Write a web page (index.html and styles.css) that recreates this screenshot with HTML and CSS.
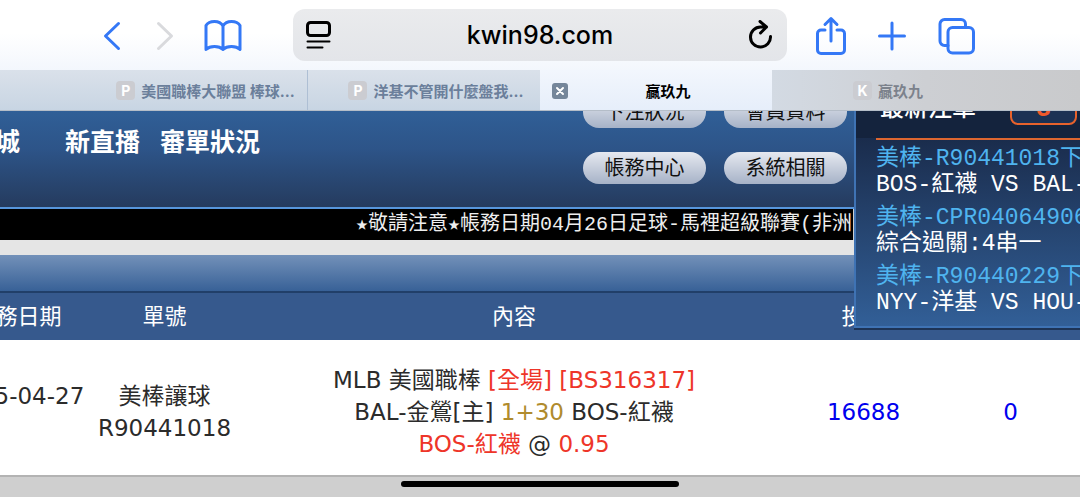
FILE: index.html
```html
<!DOCTYPE html>
<html lang="zh-TW">
<head>
    <meta charset="UTF-8">
    <meta name="viewport" content="width=device-width, initial-scale=1.0">
    <title>贏玖九</title>
    <link rel="stylesheet" href="styles.css">
</head>
<body>
    <div class="browser">
        <div class="toolbar">
            <div class="tools tools-left">
                <button type="button" aria-label="上一頁">
                    <svg width="18" height="30" viewBox="0 0 18 30"><path d="M15.500 2.500 2.500 15l13 12.500"/></svg>
                </button>
                <button type="button" class="disabled" aria-label="下一頁" disabled>
                    <svg width="18" height="30" viewBox="0 0 18 30"><path d="M2.500 2.500l13 12.500-13 12.500"/></svg>
                </button>
                <button type="button" class="book" aria-label="書籤">
                    <svg width="38" height="32" viewBox="0 0 38 32"><path d="M19 6C17 2.500 13.500 1.500 10.500 1.500 7 1.500 3.500 3 2 5.500V29.500C4 27.500 7 26.500 10.500 26.500c3.500 0 6.500 1 8.500 3 2-2 5-3 8.500-3s6.500 1 8.500 3V5.500C34.500 3 31 1.500 27.500 1.500 24.500 1.500 21 2.500 19 6V29.500"/></svg>
                </button>
            </div>
            <div class="address">
                <button type="button" aria-label="網頁選單">
                    <svg width="26" height="30" viewBox="0 0 26 30"><rect x="1.500" y="2.500" width="22" height="13" rx="3"/><path class="thin" d="M1.500 21.500h22M1.500 27.500h15"/></svg>
                </button>
                <input type="text" value="kwin98.com" aria-label="網址">
                <button type="button" aria-label="重新載入">
                    <svg width="26" height="30" viewBox="0 0 26 30"><path d="M22.500 16.500A10 10 0 1 1 12.500 7h6M12 1.500 18.500 7 12.500 13"/></svg>
                </button>
            </div>
            <div class="tools tools-right">
                <button type="button" aria-label="分享">
                    <svg width="30" height="40" viewBox="0 0 30 40"><path d="M9 14H5a3.500 3.500 0 0 0-3.500 3.500V34A3.500 3.500 0 0 0 5 37.500H25a3.500 3.500 0 0 0 3.500-3.500V17.500A3.500 3.500 0 0 0 25 14H21M15 25V2.500M9 8.500l6-6 6 6"/></svg>
                </button>
                <button type="button" aria-label="新增分頁">
                    <svg width="28" height="30" viewBox="0 0 28 30"><path d="M14 2v26M1.500 15h25"/></svg>
                </button>
                <button type="button" aria-label="所有分頁">
                    <svg width="38" height="38" viewBox="0 0 38 38"><path d="M10 28.500H6.500a4.500 4.500 0 0 1-4.500-4.500V7A4.500 4.500 0 0 1 6.500 2.500H23A4.500 4.500 0 0 1 27.500 7v3.500"/><rect x="10" y="10.500" width="25.500" height="25.500" rx="4.500"/></svg>
                </button>
            </div>
        </div>
        <div class="tabs">
            <div class="tab"><span class="favicon">P</span>美國職棒大聯盟 棒球...</div>
            <div class="tab"><span class="favicon">P</span>洋基不管開什麼盤我...</div>
            <div class="tab active">
                <button type="button" class="close" aria-label="關閉分頁">
                    <svg width="16" height="16" viewBox="0 0 16 16"><path d="M5 5l6 6M11 5l-6 6"/></svg>
                </button>
                贏玖九
            </div>
            <div class="tab last"><span class="favicon">K</span>贏玖九</div>
        </div>
    </div>

    <main class="page">
        <header class="site-header">
            <nav>
                <a href="#">城</a>
                <a href="#">新直播</a>
                <a href="#">審單狀況</a>
            </nav>
            <div class="menu">
                <button type="button">下注狀況</button>
                <button type="button">會員資料</button>
                <button type="button">帳務中心</button>
                <button type="button">系統相關</button>
            </div>
        </header>

        <div class="notice">★敬請注意★帳務日期04月26日足球-馬裡超級聯賽(非洲</div>
        <div class="title-bar"></div>

        <table class="bets">
            <colgroup>
                <col class="side"><col class="side"><col><col class="side"><col class="side">
            </colgroup>
            <thead>
                <tr>
                    <th>帳務日期</th>
                    <th>單號</th>
                    <th>內容</th>
                    <th>投注</th>
                    <th></th>
                </tr>
            </thead>
            <tbody>
                <tr>
                    <td>2025-04-27<br>&nbsp;</td>
                    <td>美棒讓球<br>R90441018</td>
                    <td>
                        MLB 美國職棒 <span class="red">[全場] [BS316317]</span><br>
                        BAL-金鶯[主] <span class="gold">1+30</span> BOS-紅襪<br>
                        <span class="red">BOS-紅襪</span> @ <span class="red">0.95</span>
                    </td>
                    <td class="blue">16688</td>
                    <td class="blue">0</td>
                </tr>
            </tbody>
        </table>

        <!-- 最新注單浮動視窗 -->
        <aside class="latest">
            <div class="latest-head">
                <h2>最新注單</h2>
                <span class="count">3</span>
            </div>
            <ul>
                <li><a href="#">美棒-R90441018下</a>BOS-紅襪 VS BAL-</li>
                <li><a href="#">美棒-CPR04064906</a>綜合過關:4串一</li>
                <li><a href="#">美棒-R90440229下</a>NYY-洋基 VS HOU-</li>
            </ul>
        </aside>
    </main>
    <div class="home-indicator"></div>
</body>
</html>
```
FILE: styles.css
```css
* {
    box-sizing: border-box;
}
body {
    margin: 0;
    min-height: 100vh;
    display: flex;
    flex-direction: column;
    position: relative;
    overflow: hidden;
    background: #cfcfcf;
    font-family: "DejaVu Sans", "Noto Sans CJK TC", sans-serif;
}
button {
    padding: 0;
    border: none;
    background: none;
    color: inherit;
    font: inherit;
    cursor: pointer;
}
a {
    color: inherit;
    text-decoration: none;
}
svg {
    display: block;
    fill: none;
    stroke: currentColor;
    stroke-width: 3;
    stroke-linecap: round;
    stroke-linejoin: round;
}

/* 瀏覽器工具列 */
.browser {
    font-family: Inter, "Noto Sans CJK TC", sans-serif;
    background: linear-gradient(#ffffff 30%, #e6eefa);
}
.toolbar {
    display: flex;
    align-items: center;
    height: 70px;
}
.tools {
    flex: 0 0 293px;
    display: flex;
    align-items: center;
    padding-top: 2px;
    color: #3478f6;
}
.tools-left {
    justify-content: flex-end;
    gap: 35px;
    padding-right: 51px;
}
.tools .disabled {
    color: #d9dadd;
}
.book {
    margin-left: -5px;
}
.tools-right {
    gap: 32px;
    padding-left: 29px;
}
.address {
    flex: 1;
    min-width: 0;
    height: 52px;
    display: flex;
    align-items: center;
    padding: 0 13px;
    border-radius: 12px;
    background: linear-gradient(#eaebed, #e3e5e9);
}
.address input {
    flex: 1;
    min-width: 0;
    border: none;
    background: none;
    color: #000;
    font-family: inherit;
    font-size: 25px;
    font-weight: 500;
    text-align: center;
}
.address .thin {
    stroke-width: 2;
}

/* 分頁列 */
.tabs {
    display: flex;
    height: 41px;
    border-bottom: 1px solid #b4bdc8;
    font-size: 15px;
    font-weight: 700;
}
.tab {
    position: relative;
    flex: 1 1 232px;
    display: flex;
    align-items: center;
    justify-content: center;
    gap: 6px;
    padding-left: 24px;
    white-space: nowrap;
    color: #6b7f9b;
    background: linear-gradient(#dae1ea, #c8d5e3);
}
.tab:first-child {
    flex-basis: 308px;
    padding-left: 104px;
    border-right: 1px solid #aebfd4;
}
.tab.active {
    color: #000;
    background: linear-gradient(#f2f6fd, #e6eefa);
}
.tab.last {
    flex-basis: 308px;
    padding: 0 76px 0 0;
    color: #7c828c;
    background: linear-gradient(90deg, #d3dae3, #cdcfd3 50%, #c9cacc);
}
.favicon {
    width: 19px;
    height: 19px;
    border-radius: 4px;
    background: #cbccd1;
    color: #fff;
    font-size: 14px;
    line-height: 19px;
    text-align: center;
}
.close {
    position: absolute;
    left: 12px;
    top: 13px;
    border-radius: 3px;
    background: #75869a;
    color: #fff;
}
.close svg {
    stroke-width: 2;
}

/* 網站頁首 */
.page {
    position: relative;
    overflow: hidden;
}
.site-header {
    display: flex;
    justify-content: space-between;
    height: 98px;
    padding-right: 233px;
    border-bottom: 2px solid #5796dc;
    background: linear-gradient(#305f97, #2d5488 40%, #253b5e);
}
.site-header nav {
    display: flex;
    gap: 20px;
    margin-left: -5px;
    padding-top: 13px;
    color: #fff;
    font-size: 25px;
    font-weight: 700;
    line-height: 37px;
}
.site-header nav a:first-child {
    margin-right: 25px;
}
.menu {
    display: grid;
    grid-template-columns: 123px 123px;
    grid-auto-rows: 32px;
    gap: 24px 18px;
    margin-top: -15px;
}
.menu button {
    border-radius: 16px;
    background: linear-gradient(#e6e9f0, #a6b2c7);
    color: #111;
    font-size: 20px;
    line-height: 32px;
}
.notice {
    padding-left: 356px;
    margin-right: 227px;
    height: 31px;
    overflow: hidden;
    white-space: nowrap;
    background: #000;
    color: #eee;
    font-family: "Liberation Mono", "DejaVu Sans Mono", "Noto Sans CJK TC", monospace;
    font-size: 20px;
    line-height: 32px;
}
.title-bar {
    height: 53px;
    border-top: 15px solid #e5e5e5;
    border-bottom: 2px solid #213f69;
    background: linear-gradient(#7391b9, #386197);
}

/* 注單列表 */
.bets {
    width: calc(100% + 60px);
    margin-left: -56px;
    table-layout: fixed;
    border-collapse: collapse;
    border-bottom: 2px solid #b3b3b3;
    background: #fff;
    color: #2b2b2b;
    font-size: 23px;
    line-height: 32px;
    text-align: center;
}
.bets .side {
    width: 147px;
}
.bets th {
    height: 47px;
    padding: 0;
    background: #36598d;
    color: #fff;
    font-size: 22px;
    font-weight: 400;
}
.bets td {
    padding: 24px 0 15px;
    white-space: nowrap;
}
.red {
    color: #ee3529;
}
.gold {
    color: #b08b2d;
}
.bets .blue {
    color: #0000ee;
}

.latest {
    position: absolute;
    top: -32px;
    right: 0;
    width: 226px;
    overflow: hidden;
    padding-left: 20px;
    border-left: 2px solid #3f73b4;
    border-bottom: 2px solid #3f73b4;
    box-shadow: 0 2px 0 #1d3355;
    background: linear-gradient(#14233d 59px, #1a2c4c 59px, #325f97);
    color: #fff;
    font-family: "Liberation Mono", "Noto Sans CJK TC", monospace;
    font-size: 23px;
    line-height: 26px;
    white-space: nowrap;
}
.latest-head {
    display: flex;
    align-items: flex-end;
    justify-content: space-between;
    height: 61px;
    padding: 0 3px 13px 4px;
    border-bottom: 2px solid #dd6630;
}
.latest h2 {
    margin: 0;
    font-size: 24px;
    font-weight: 500;
    line-height: 30px;
}
.count {
    width: 67px;
    height: 36px;
    border: 2px solid #e8622c;
    border-radius: 8px;
    background: #1c3154;
    color: #f0592b;
    font-size: 25px;
    font-weight: 700;
    line-height: 38px;
    text-align: center;
}
.latest ul {
    margin: 0;
    padding: 6px 0 3px;
    list-style: none;
}
.latest li {
    padding-bottom: 7px;
}
.latest li a {
    display: block;
    color: #4fb4ef;
}

.home-indicator {
    position: absolute;
    bottom: 10px;
    left: 50%;
    width: 278px;
    height: 6px;
    margin-left: -139px;
    border-radius: 3px;
    background: #000;
}
```
